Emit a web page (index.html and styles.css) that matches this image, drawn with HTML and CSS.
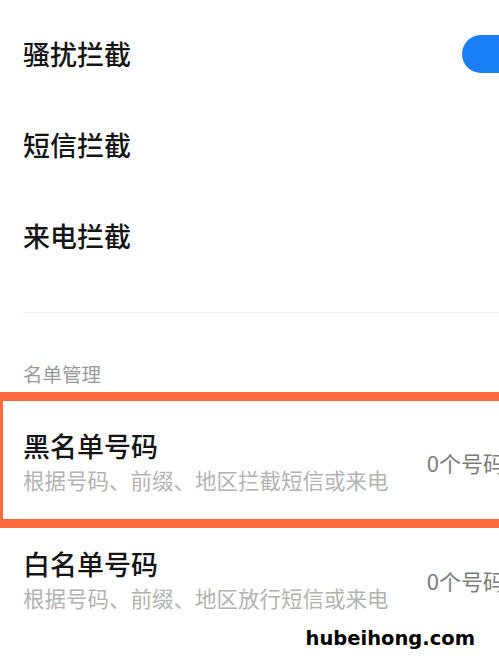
FILE: index.html
```html
<!DOCTYPE html>
<html lang="zh-CN">
<head>
<meta charset="utf-8">
<title>骚扰拦截</title>
<link rel="stylesheet" href="styles.css">
</head>
<body>
<div class="page">
  <div class="switch-list">
    <div class="switch-row">
      <span class="row-title">骚扰拦截</span>
      <span class="toggle"></span>
    </div>
    <div class="switch-row">
      <span class="row-title">短信拦截</span>
    </div>
    <div class="switch-row">
      <span class="row-title">来电拦截</span>
    </div>
  </div>
  <div class="divider"></div>
  <div class="section-label">名单管理</div>
  <div class="list-row highlight">
    <div class="list-text">
      <div class="row-title">黑名单号码</div>
      <div class="row-sub">根据号码、前缀、地区拦截短信或来电</div>
    </div>
    <div class="row-count">0个号码</div>
  </div>
  <div class="list-row plain">
    <div class="list-text">
      <div class="row-title">白名单号码</div>
      <div class="row-sub">根据号码、前缀、地区放行短信或来电</div>
    </div>
    <div class="row-count">0个号码</div>
  </div>
  <div class="watermark">hubeihong.com</div>
</div>
</body>
</html>
```
FILE: styles.css
```css
html, body {
  margin: 0;
  padding: 0;
  background: #ffffff;
}
body {
  width: 499px;
  height: 663px;
  overflow: hidden;
  font-family: "Noto Sans CJK SC", "Noto Sans", sans-serif;
}
.page {
  padding-top: 8px;
}
.switch-row {
  height: 91px;
  display: flex;
  align-items: center;
  justify-content: space-between;
  padding-left: 23px;
}
.row-title {
  font-size: 27px;
  line-height: 34px;
  font-weight: 500;
  color: #151515;
  white-space: nowrap;
}
.toggle {
  width: 62px;
  height: 38px;
  border-radius: 19px;
  background: #1a7ff5;
  margin-right: -25px;
  flex: none;
}
.divider {
  margin-top: 31px;
  margin-left: 23px;
  height: 1px;
  background: #ebebeb;
}
.section-label {
  margin-top: 48px;
  margin-bottom: 5px;
  padding-left: 23px;
  font-size: 19.5px;
  line-height: 26px;
  color: #9a9a9a;
}
.list-row {
  display: flex;
  align-items: center;
  justify-content: space-between;
  white-space: nowrap;
}
.highlight {
  border-top: 9px solid #fd6a3e;
  border-bottom: 9px solid #fd6a3e;
  border-left: 3px solid #fd6a3e;
  padding: 28px 0 25px 20px;
}
.plain {
  padding: 19px 0 0 23px;
}
.row-sub {
  margin-top: 3px;
  font-size: 21.5px;
  line-height: 28px;
  color: #b3b3b3;
}
.row-count {
  font-size: 22px;
  line-height: 30px;
  color: #7d7d7d;
  margin-right: -6px;
  flex: none;
}
.watermark {
  margin-top: 14px;
  text-align: right;
  padding-right: 24px;
  font-family: "DejaVu Sans", sans-serif;
  font-weight: bold;
  font-size: 19.5px;
  line-height: 26px;
  color: #000;
}
```
